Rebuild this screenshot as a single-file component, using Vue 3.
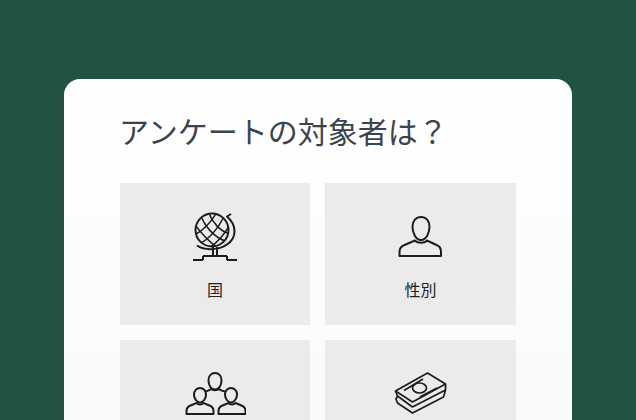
<template>
  <div class="page">
    <section class="card">
      <h1 class="title">アンケートの対象者は？</h1>
      <div class="grid">
        <button class="tile">
          <svg class="icon" viewBox="0 0 50 52" width="50" height="52">
            <clipPath id="globe-clip">
              <circle cx="22" cy="20" r="16.500" />
            </clipPath>
            <g clip-path="url(#globe-clip)" class="thin">
              <path d="M2 26C12 22 22 12 28 0M6 36C18 30 28 20 35 4M16 40C26 34 34 26 40 14" />
              <path d="M10 3C14 16 24 28 38 32M3 12C10 22 18 32 30 39M18 1C22 12 30 22 41 24" />
            </g>
            <circle cx="22" cy="20" r="16.500" />
            <path d="M41 4L37 6.500C47 15 47 28 37 34.500C29 40 15 41 7 35.500" />
            <path d="M23 37v9M27 37v9M13 46h24M13 46v4M37 46v4M3 50h10M37 50h10" />
          </svg>
          <span class="label">国</span>
        </button>
        <button class="tile">
          <svg class="icon" viewBox="0 0 50 52" width="50" height="52">
            <path d="M25 7c5 0 8.500 4 8.500 9.500 0 6-3 13.500-8.500 13.500s-8.500-7.500-8.500-13.500C16.500 11 20 7 25 7z" />
            <path d="M3.500 46v-4c0-4 2-6 5-7l10.500-4.500c2 3 10 3 12 0L40.500 35c3 1 4.500 3 4.500 7v4z" />
          </svg>
          <span class="label">性別</span>
        </button>
        <button class="tile">
          <svg class="icon" viewBox="0 0 62 50" width="62" height="50">
            <path d="M31 6c4 0 6.500 3 6.500 7.500S35 22.500 31 22.500 24.500 18 24.500 13.500 27 6 31 6z" />
            <path d="M16 21c3.500 0 6 3 6 6.500s-2.500 8-6 8-6-4.500-6-8S12.500 21 16 21zM47 21c3.500 0 6 3 6 6.500s-2.500 8-6 8-6-4.500-6-8 2.500-6.500 6-6.500z" />
            <path d="M2.500 47v-3c0-3 1.500-4.500 4-5.500l6-2.500c1.500 2 5.500 2 7 0l6 2.500c2.500 1 4 2.500 4 5.500v3zM34.500 47v-3c0-3 1.500-4.500 4-5.500l6-2.500c1.500 2 5.500 2 7 0l6 2.500c2.500 1 4 2.500 4 5.500v3z" />
            <path d="M21 24.500c3-.5 4-1 6-2.500 2 1.500 6 1.500 8 0 2 1.500 3 2 6 2.500" />
          </svg>
        </button>
        <button class="tile">
          <svg class="icon money" viewBox="0 0 56 50" width="56" height="50">
            <path d="M34.500 6l18 11-33 18-17-11z" />
            <path d="M2.500 24l2 5 15 11 33-17v-6M4.500 29l-1.500 3 1.500 4 15 10 31-16 2-7" />
            <path d="M11 23.500L30 12M27 30l17-9" />
            <ellipse cx="26.500" cy="21" rx="7" ry="5" />
          </svg>
        </button>
      </div>
    </section>
  </div>
</template>

<script setup>
</script>

<style>
html,
body {
  margin: 0;
  overflow: hidden;
}
</style>

<style scoped>
.page {
  width: 636px;
  height: 420px;
  overflow: hidden;
  background: #225240;
  padding: 79px 64px 0;
  box-sizing: border-box;
  font-family: "Noto Sans CJK JP", "Noto Sans", sans-serif;
}

.card {
  background: linear-gradient(#ffffff, #fafafa 340px);
  border-radius: 16px;
  padding: 28px 56px 56px;
  height: 400px;
  box-sizing: border-box;
}

.title {
  margin: 0 0 30px -1px;
  font-size: 30px;
  line-height: 46px;
  font-weight: 400;
  color: #3b444d;
}

.grid {
  display: grid;
  grid-template-columns: 190px 191px;
  grid-auto-rows: 142px;
  gap: 15px;
}

.tile {
  display: flex;
  flex-direction: column;
  align-items: center;
  padding: 27px 0 0;
  border: none;
  background: #ebebeb;
  font-family: inherit;
}

.icon {
  fill: none;
  stroke: #1c1c1c;
  stroke-width: 2;
  stroke-linejoin: round;
}

.icon .thin {
  stroke-width: 1.500;
}

.icon.money {
  stroke-width: 1.700;
}

.label {
  margin-top: 16px;
  font-size: 16px;
  line-height: 22px;
  color: #222;
}
</style>
